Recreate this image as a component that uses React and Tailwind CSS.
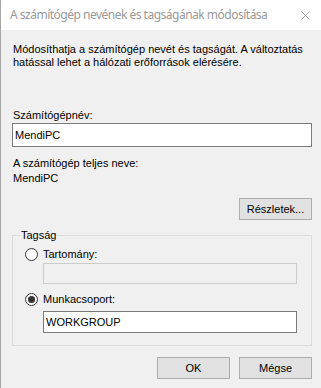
import { X } from 'lucide-react';

const sans = { fontFamily: '"Liberation Sans", Arial, sans-serif' };

function Radio({ checked }) {
  return (
    <span className="flex h-[13px] w-[13px] items-center justify-center rounded-full border border-[#333333] bg-white">
      {checked && <span className="h-[7px] w-[7px] rounded-full bg-[#333333]" />}
    </span>
  );
}

function Button({ children, className = '' }) {
  return (
    <div className={`flex h-[22px] w-[73px] items-center justify-center border border-[#adadad] bg-[#e1e1e1] text-[11px] text-black ${className}`}>
      {children}
    </div>
  );
}

export default function App() {
  return (
    <div className="flex h-[388px] w-[321px] flex-col overflow-hidden border-l border-[#a6a6a6] bg-[#f0f0f0]">
      {/* title bar */}
      <div className="flex h-[30px] shrink-0 items-center justify-between bg-white pl-[9px] pr-[8px]">
        <span className="whitespace-nowrap font-['Noto_Sans'] text-[12px] tracking-[-0.5px] text-[#999999]">
          A számítógép nevének és tagságának módosítása
        </span>
        <X size={15} strokeWidth={1} className="shrink-0 text-[#7a7a7a]" />
      </div>

      <div className="flex flex-col px-[11px] text-[11px] leading-[13px] text-black" style={sans}>
        <p className="ml-px mt-[13px]">
          Módosíthatja a számítógép nevét és tagságát. A változtatás
          <br />
          hatással lehet a hálózati erőforrások elérésére.
        </p>

        <p className="ml-px mt-[40px]">Számítógépnév:</p>
        <div className="mt-[1px] flex h-[24px] w-[300px] items-center border border-[#7a7a7a] bg-white pl-[2px]">
          MendiPC
        </div>

        <p className="ml-px mt-[10px]">A számítógép teljes neve:</p>
        <p className="ml-px mt-[2px]">MendiPC</p>

        <div className="mt-[13px] flex w-[300px] justify-end">
          <Button>Részletek...</Button>
        </div>

        {/* membership group */}
        <div className="relative mt-[15px] h-[111px] w-[300px] border border-[#dcdcdc]">
          <span className="absolute -top-[7px] left-[7px] bg-[#f0f0f0] px-[1px]">Tagság</span>
          <div className="flex flex-col pl-[12px] pt-[12px]">
            <div className="flex items-center gap-[5px]">
              <Radio />
              <span>Tartomány:</span>
            </div>
            <div className="ml-[18px] mt-[2px] h-[21px] w-[254px] border border-[#cccccc] bg-[#f0f0f0]" />
            <div className="mt-[9px] flex items-center gap-[5px]">
              <Radio checked />
              <span>Munkacsoport:</span>
            </div>
            <div className="ml-[18px] mt-[5px] flex h-[22px] w-[254px] items-center border border-[#7a7a7a] bg-white pl-[2px]">
              WORKGROUP
            </div>
          </div>
        </div>

        <div className="mt-[11px] flex w-[300px] justify-end gap-[9px]">
          <Button>OK</Button>
          <Button>Mégse</Button>
        </div>
      </div>
    </div>
  );
}
